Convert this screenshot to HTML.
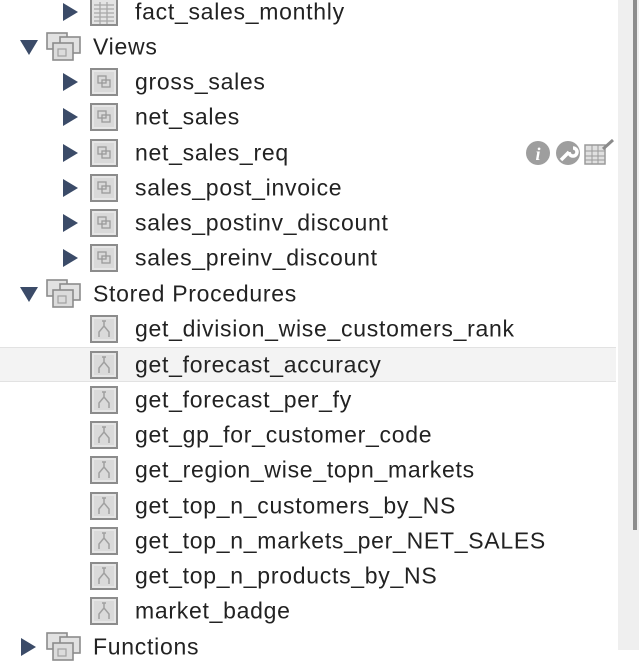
<!DOCTYPE html>
<html><head><style>
html,body{margin:0;padding:0;width:639px;height:650px;overflow:hidden;background:#fff;font-family:"Liberation Sans",Tahoma,sans-serif;}
.row{position:absolute;left:0;height:35px;width:616px;}
.t{position:absolute;top:50%;transform:translateY(-50%);font-size:23px;color:#222;white-space:nowrap;letter-spacing:0.72px}
.arr{position:absolute;top:50%;transform:translateY(-50%)}
.ic{position:absolute;top:50%;transform:translateY(-50%)}
.sel{background:#f3f3f3;border-top:1px solid #e2e2e2;border-bottom:1px solid #e2e2e2;box-sizing:border-box}
</style></head><body>
<svg width="0" height="0" style="position:absolute">
<defs>
<symbol id="ra" viewBox="0 0 16 18"><path d="M1 0L16 9L1 18Z" fill="#3b4b68"/></symbol>
<symbol id="da" viewBox="0 0 18 16"><path d="M0 1L18 1L9 16Z" fill="#3b4b68"/></symbol>
<symbol id="tbl" viewBox="0 0 28 28"><rect x="1" y="1" width="26" height="26" fill="#e4e4e4" stroke="#8c8c8c" stroke-width="2"/><path d="M4 7H24M4 11H24M4 15H24M4 19H24M4 23H24M10 4V26M17 4V26" stroke="#a8a8a8" stroke-width="1.3"/></symbol>
<symbol id="vw" viewBox="0 0 28 28"><rect x="1" y="1" width="26" height="26" fill="#e6e6e6" stroke="#8c8c8c" stroke-width="2"/><rect x="4" y="4" width="20" height="20" fill="#d9d9d9"/><rect x="8" y="8" width="8" height="7" fill="none" stroke="#9a9a9a" stroke-width="1.3"/><rect x="12" y="12" width="8" height="7" fill="none" stroke="#9a9a9a" stroke-width="1.3"/></symbol>
<symbol id="sp" viewBox="0 0 28 28"><rect x="1" y="1" width="26" height="26" fill="#e6e6e6" stroke="#8c8c8c" stroke-width="2"/><rect x="4" y="4" width="20" height="20" fill="#dadada"/><path d="M14 6V11M14 11L9 17V22M14 11L19 17V22M12 6H16" stroke="#a0a0a0" stroke-width="1.5" fill="none"/></symbol>
<symbol id="grp" viewBox="0 0 36 30"><rect x="1" y="1" width="20" height="16" fill="#e2e2e2" stroke="#8c8c8c" stroke-width="1.6"/><rect x="14" y="5" width="20" height="16" fill="#e2e2e2" stroke="#8c8c8c" stroke-width="1.6"/><rect x="7" y="11" width="20" height="17" fill="#dcdcdc" stroke="#8c8c8c" stroke-width="1.6"/><rect x="12" y="17" width="8" height="7" fill="none" stroke="#a0a0a0" stroke-width="1.2"/></symbol>
</defs></svg>

<div style="position:absolute;left:618px;top:0;width:21px;height:650px;background:#efefef"></div>
<div style="position:absolute;left:633px;top:0;width:4px;height:530px;background:#8d8d8d"></div>

<div class="row" style="top:-6px"><svg class="arr" style="left:62px" width="16" height="18"><use href="#ra"/></svg><svg class="ic" style="left:90px" width="28" height="28"><use href="#tbl"/></svg><div class="t" style="left:135px">fact_sales_monthly</div></div>
<div class="row" style="top:29px"><svg class="arr" style="left:20px" width="18" height="16"><use href="#da"/></svg><svg class="ic" style="left:46px" width="36" height="30"><use href="#grp"/></svg><div class="t" style="left:93px">Views</div></div>
<div class="row" style="top:64px"><svg class="arr" style="left:62px" width="16" height="18"><use href="#ra"/></svg><svg class="ic" style="left:90px" width="28" height="28"><use href="#vw"/></svg><div class="t" style="left:135px">gross_sales</div></div>
<div class="row" style="top:99px"><svg class="arr" style="left:62px" width="16" height="18"><use href="#ra"/></svg><svg class="ic" style="left:90px" width="28" height="28"><use href="#vw"/></svg><div class="t" style="left:135px">net_sales</div></div>
<div class="row" style="top:135px"><svg class="arr" style="left:62px" width="16" height="18"><use href="#ra"/></svg><svg class="ic" style="left:90px" width="28" height="28"><use href="#vw"/></svg><div class="t" style="left:135px">net_sales_req</div>
<svg class="ic" style="left:525px" width="90" height="28" viewBox="0 0 90 28"><circle cx="13" cy="14" r="12" fill="#9e9e9e"/><text x="13" y="21" font-family="Liberation Serif" font-style="italic" font-weight="bold" font-size="18" fill="#fff" text-anchor="middle">i</text><circle cx="43" cy="14" r="12" fill="#9e9e9e"/><path d="M36 21L44 13M44 13a4 4 0 1 0 4 -4" stroke="#fff" stroke-width="3.5" fill="none"/><rect x="60" y="6" width="20" height="19" fill="#e0e0e0" stroke="#9a9a9a" stroke-width="1.5"/><path d="M60 12H80M60 17H80M60 21H80M67 6V25M73 6V25" stroke="#9a9a9a"/><path d="M78 10L88 1" stroke="#8a8a8a" stroke-width="3"/></svg></div>
<div class="row" style="top:170px"><svg class="arr" style="left:62px" width="16" height="18"><use href="#ra"/></svg><svg class="ic" style="left:90px" width="28" height="28"><use href="#vw"/></svg><div class="t" style="left:135px">sales_post_invoice</div></div>
<div class="row" style="top:205px"><svg class="arr" style="left:62px" width="16" height="18"><use href="#ra"/></svg><svg class="ic" style="left:90px" width="28" height="28"><use href="#vw"/></svg><div class="t" style="left:135px">sales_postinv_discount</div></div>
<div class="row" style="top:240px"><svg class="arr" style="left:62px" width="16" height="18"><use href="#ra"/></svg><svg class="ic" style="left:90px" width="28" height="28"><use href="#vw"/></svg><div class="t" style="left:135px">sales_preinv_discount</div></div>
<div class="row" style="top:276px"><svg class="arr" style="left:20px" width="18" height="16"><use href="#da"/></svg><svg class="ic" style="left:46px" width="36" height="30"><use href="#grp"/></svg><div class="t" style="left:93px">Stored Procedures</div></div>
<div class="row" style="top:311px"><svg class="ic" style="left:90px" width="28" height="28"><use href="#sp"/></svg><div class="t" style="left:135px">get_division_wise_customers_rank</div></div>
<div class="row sel" style="top:347px"><svg class="ic" style="left:90px" width="28" height="28"><use href="#sp"/></svg><div class="t" style="left:135px">get_forecast_accuracy</div></div>
<div class="row" style="top:382px"><svg class="ic" style="left:90px" width="28" height="28"><use href="#sp"/></svg><div class="t" style="left:135px">get_forecast_per_fy</div></div>
<div class="row" style="top:417px"><svg class="ic" style="left:90px" width="28" height="28"><use href="#sp"/></svg><div class="t" style="left:135px">get_gp_for_customer_code</div></div>
<div class="row" style="top:452px"><svg class="ic" style="left:90px" width="28" height="28"><use href="#sp"/></svg><div class="t" style="left:135px">get_region_wise_topn_markets</div></div>
<div class="row" style="top:488px"><svg class="ic" style="left:90px" width="28" height="28"><use href="#sp"/></svg><div class="t" style="left:135px">get_top_n_customers_by_NS</div></div>
<div class="row" style="top:523px"><svg class="ic" style="left:90px" width="28" height="28"><use href="#sp"/></svg><div class="t" style="left:135px">get_top_n_markets_per_NET_SALES</div></div>
<div class="row" style="top:558px"><svg class="ic" style="left:90px" width="28" height="28"><use href="#sp"/></svg><div class="t" style="left:135px">get_top_n_products_by_NS</div></div>
<div class="row" style="top:593px"><svg class="ic" style="left:90px" width="28" height="28"><use href="#sp"/></svg><div class="t" style="left:135px">market_badge</div></div>
<div class="row" style="top:629px"><svg class="arr" style="left:20px" width="16" height="18"><use href="#ra"/></svg><svg class="ic" style="left:46px" width="36" height="30"><use href="#grp"/></svg><div class="t" style="left:93px">Functions</div></div>
</body></html>
